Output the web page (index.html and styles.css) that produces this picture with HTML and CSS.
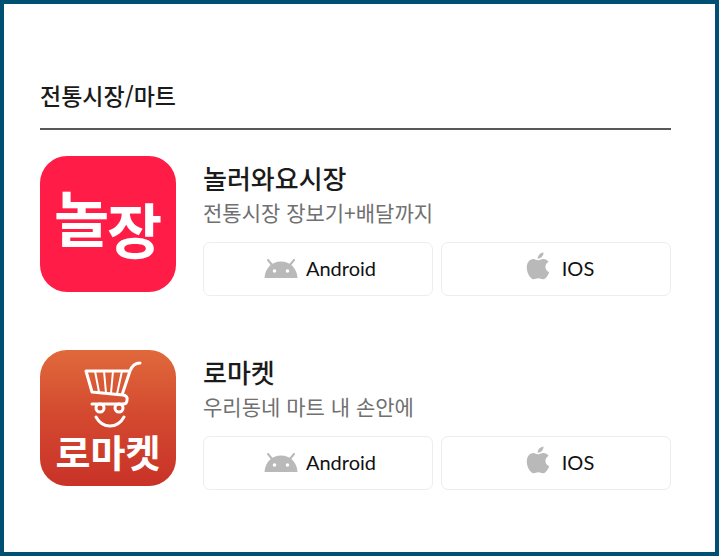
FILE: index.html
```
<!DOCTYPE html>
<html lang="ko">
<head>
  <meta charset="utf-8">
  <meta name="viewport" content="width=device-width, initial-scale=1">
  <title>전통시장/마트</title>
  <link rel="stylesheet" href="styles.css">
</head>
<body>
  <svg class="symbols" aria-hidden="true">
    <symbol id="android" viewBox="0 0 34 19">
      <path d="M4 1 L8.500 6.500 M30 1 L25.500 6.500" stroke="#b9b9b9" stroke-width="2" stroke-linecap="round"/>
      <path d="M.5 19 C1 9 8 2.500 17 2.500 C26 2.500 33 9 33.500 19Z" fill="#b9b9b9"/>
      <circle cx="10.500" cy="12" r="1.800" fill="#fff"/>
      <circle cx="23.500" cy="12" r="1.800" fill="#fff"/>
    </symbol>
    <symbol id="apple" viewBox="0 0 24 28">
      <path d="M17.500 .5 C17.700 3.800 15 6.800 11.700 6.700 C11.500 3.600 14.400 .8 17.500 .5Z M12 8.300 C13.400 8.300 15 6.800 17.400 6.900 C19.600 7 21.500 8 22.600 9.700 C18 12.500 18.600 18.300 23.200 20.200 C22.300 22.800 20.300 26 18.300 27 C16 28 14.500 26.200 12.200 26.300 C9.700 26.300 8.500 28 6.500 27 C3.500 25.600 .8 20.300 .8 15.500 C.8 10.500 3.800 7 7.300 7 C9.300 7 10.800 8.300 12 8.300Z" fill="#b9b9b9"/>
    </symbol>
  </svg>

  <main>
    <h1>전통시장/마트</h1>

    <article class="app">
      <svg class="logo" viewBox="0 0 136 136" role="img" aria-label="놀장">
        <rect width="136" height="136" rx="27" fill="#ff1d48"/>
        <text class="logo-brush" fill="#fff"><tspan x="14" y="86">놀</tspan><tspan x="67" y="98">장</tspan></text>
      </svg>
      <div class="info">
        <h2>놀러와요시장</h2>
        <p>전통시장 장보기+배달까지</p>
        <div class="stores">
          <a href="#"><svg class="android"><use href="#android"/></svg>Android</a>
          <a href="#" class="ios"><svg class="apple"><use href="#apple"/></svg>IOS</a>
        </div>
      </div>
    </article>

    <article class="app">
      <svg class="logo" viewBox="0 0 136 136" role="img" aria-label="로마켓">
        <defs>
          <linearGradient id="orange" x1="0" y1="0" x2="0" y2="1">
            <stop offset="0" stop-color="#e0693b"/>
            <stop offset=".5" stop-color="#d3482f"/>
            <stop offset="1" stop-color="#c93228"/>
          </linearGradient>
        </defs>
        <rect width="136" height="136" rx="27" fill="url(#orange)"/>
        <g fill="none" stroke="#fff" stroke-width="3" stroke-linecap="round" stroke-linejoin="round">
          <path d="M100 13 Q93 13 90 21 L82 45 M90 21 H46 L52 42 L83 45 Q88 46 87 50 Q87 54 83 54 H52"/>
          <path d="M55 21 L59 42 M64 21 L66 43 M73 21 L71 43 M82 21 L77 44" stroke-width="2"/>
          <circle cx="60" cy="58" r="4"/>
          <circle cx="79" cy="58" r="4"/>
          <path d="M56 67 Q61 76 70 76 Q79 76 84 67"/>
        </g>
        <text class="logo-name" x="68" y="117" text-anchor="middle" fill="#fff">로마켓</text>
      </svg>
      <div class="info">
        <h2>로마켓</h2>
        <p>우리동네 마트 내 손안에</p>
        <div class="stores">
          <a href="#"><svg class="android"><use href="#android"/></svg>Android</a>
          <a href="#" class="ios"><svg class="apple"><use href="#apple"/></svg>IOS</a>
        </div>
      </div>
    </article>
  </main>
</body>
</html>
```
FILE: styles.css
```
* {
  box-sizing: border-box;
}
body {
  margin: 0;
  min-height: 100vh;
  padding: 75px 44px 40px 36px;
  border: 4px solid #005074;
  background: #fff;
  color: #1b1b1b;
  font-family: "Noto Sans CJK KR", sans-serif;
}
.symbols {
  position: absolute;
  width: 0;
  height: 0;
}
h1, h2, p {
  margin: 0;
}
h1 {
  padding-bottom: 17px;
  border-bottom: 2px solid #58585a;
  font-size: 23px;
  line-height: 32px;
  font-weight: 500;
}
.app {
  display: flex;
  gap: 27px;
  margin-top: 26px;
}
.app + .app {
  margin-top: 54px;
}
.logo {
  flex: none;
  width: 136px;
  height: 136px;
}
.logo-brush {
  font-size: 60px;
  font-weight: 700;
}
.logo-name {
  font-size: 38px;
  font-weight: 700;
}
.info {
  flex: 1;
  padding-top: 4px;
}
h2 {
  font-size: 26px;
  line-height: 36px;
  font-weight: 500;
}
p {
  color: #707070;
  font-size: 21px;
  line-height: 32px;
}
.stores {
  display: grid;
  grid-template-columns: 1fr 1fr;
  gap: 8px;
  margin-top: 14px;
}
.stores a {
  display: flex;
  align-items: center;
  justify-content: center;
  gap: 8px;
  height: 54px;
  padding: 0 0 3px 4px;
  border: 1px solid #ededed;
  border-radius: 7px;
  color: #111;
  font-family: Lato, sans-serif;
  font-size: 20px;
  text-decoration: none;
}
.stores .ios {
  gap: 12px;
  padding-left: 8px;
}
.android {
  width: 34px;
  height: 19px;
  margin-top: 2px;
}
.apple {
  width: 24px;
  height: 28px;
  margin-bottom: 4px;
}
```
